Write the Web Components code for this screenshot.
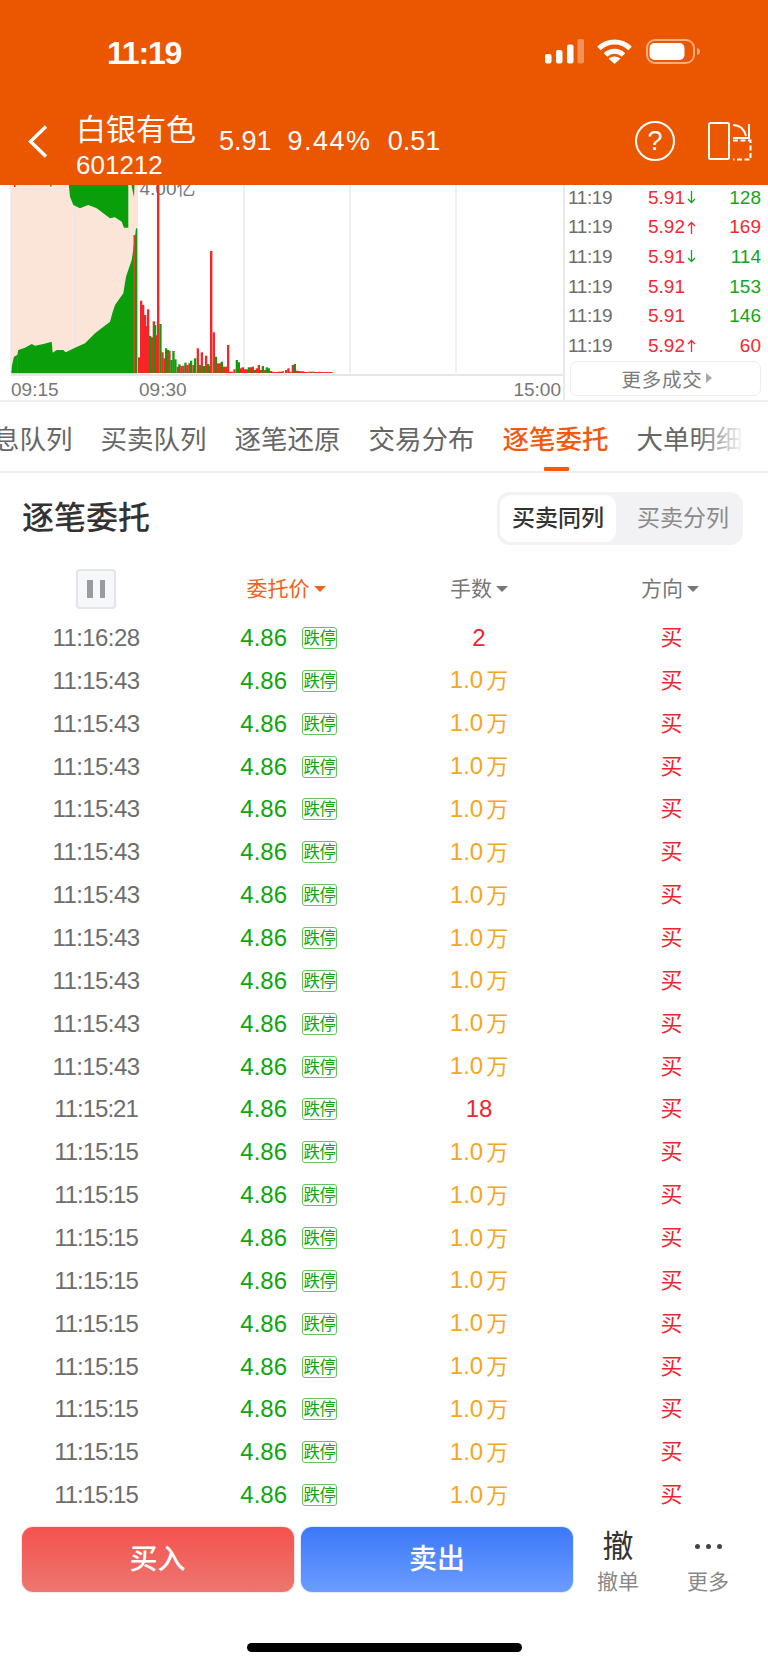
<!DOCTYPE html>
<html lang="zh-CN">

<head>
    <meta charset="UTF-8">
    <title>逐笔委托</title>
    <style>
        html, body { margin: 0; height: 1665px; overflow: hidden; background: #fff; }
        body { font-family: "Liberation Sans", "Noto Sans CJK SC", sans-serif; color: #333; }
    </style>
</head>

<body>
    <stock-header name="白银有色" code="601212"></stock-header>
    <tape-panel>
        <trade-row price="5.91" dir="down" vol="128" side="g"></trade-row>
        <trade-row price="5.92" dir="up" vol="169" side="r"></trade-row>
        <trade-row price="5.91" dir="down" vol="114" side="g"></trade-row>
        <trade-row price="5.91" vol="153" side="g"></trade-row>
        <trade-row price="5.91" vol="146" side="g"></trade-row>
        <trade-row price="5.92" dir="up" vol="60" side="r"></trade-row>
    </tape-panel>
    <tab-strip>
        <span>消息队列</span>
        <span>买卖队列</span>
        <span>逐笔还原</span>
        <span>交易分布</span>
        <span class="on">逐笔委托</span>
        <span>大单明细</span>
    </tab-strip>
    <section-head>逐笔委托</section-head>
    <order-table></order-table>
    <action-bar></action-bar>

    <script>
        const shade = (host, html) => {
            host.attachShadow({ mode: 'open' }).innerHTML = html
        }

        class StockHeader extends HTMLElement {
            constructor() {
                super()
                shade(this, `
                <style>
                    :host { display: block; height: 185px; background: #EB5600; color: #fff; }
                    .status { height: 100px; box-sizing: border-box; padding: 37px 0 0 107px; display: flex; }
                    .clock { font-size: 32px; line-height: 32px; font-weight: 700; letter-spacing: -1.2px; width: 438px; }
                    .status svg { display: block; margin-top: 2px; }
                    .nav { height: 85px; display: flex; align-items: flex-start; }
                    .back { margin: 25px 0 0 28px; width: 48px; }
                    .title { margin-top: 13px; width: 143px; }
                    .name { font-size: 30px; line-height: 34px; }
                    .code { font-size: 26px; line-height: 30px; margin: 3px 0 0 0; }
                    .quote { margin-top: 26px; display: flex; gap: 16px; font-size: 27px; line-height: 30px; width: 416px; }
                    .quote .pct { letter-spacing: 1.5px; }
                    .help { margin-top: 21px; width: 36px; height: 36px; border: 2px solid #fff; border-radius: 50%; text-align: center; font-size: 27px; line-height: 36px; }
                    .swap { margin: 21px 0 0 33px; }
                </style>
                <div class="status">
                    <div class="clock">11:19</div>
                    <svg width="156" height="26" viewBox="0 0 156 26" fill="#fff">
                        <rect x="0" y="15" width="6.5" height="9.5" rx="2"/>
                        <rect x="11" y="11" width="6.5" height="13.5" rx="2"/>
                        <rect x="22" y="5.5" width="6.5" height="19" rx="2"/>
                        <rect x="32.5" y="0" width="6.5" height="24.5" rx="2" opacity=".35"/>
                        <path d="M54 9.5A22 22 0 0 1 85 9.5M60.5 16A12.5 12.5 0 0 1 78.5 16" fill="none" stroke="#fff" stroke-width="5"/>
                        <path d="M69.5 25L63.5 19.5Q69.5 15.5 75.5 19.5Z"/>
                        <rect x="102" y="1" width="47" height="23" rx="8" fill="none" stroke="#fff" stroke-opacity=".5" stroke-width="2"/>
                        <rect x="104.5" y="4" width="35" height="17" rx="5"/>
                        <path d="M152 9Q155 10 155 12.5Q155 15 152 16Z" opacity=".5"/>
                    </svg>
                </div>
                <div class="nav">
                    <div class="back">
                        <svg width="20" height="33" viewBox="0 0 20 33" fill="none" stroke="#fff" stroke-width="3.4" style="display:block">
                            <path d="M18 1.5L2.5 16.5L18 31.5"/>
                        </svg>
                    </div>
                    <div class="title">
                        <div class="name">${this.getAttribute('name')}</div>
                        <div class="code">${this.getAttribute('code')}</div>
                    </div>
                    <div class="quote"><span>5.91</span><span class="pct">9.44%</span><span>0.51</span></div>
                    <div class="help">?</div>
                    <svg class="swap" width="44" height="40" viewBox="0 0 44 40" fill="none" stroke="#fff" stroke-width="2" style="display:block">
                        <rect x="1" y="2" width="20" height="36" rx="1.5"/>
                        <path d="M25 4Q35 4 38 15"/>
                        <path d="M41 3V17H25"/>
                        <path d="M25 19.5H42.5V38.5H25" stroke-dasharray="5 2.5"/>
                    </svg>
                </div>`)
            }
        }
        customElements.define('stock-header', StockHeader)

        // 柱子数据：x,顶部y（都是放大3倍的坐标）,颜色
        const BARS = '414,532,r;420,362,r;426,375,r;432,405,r;437,438,r;441,388,r;447,468,g;453,472,r;458,424,r;462,435,g;468,466,r;478,432,g;484,517,r;490,535,r;495,505,g;500,510,g;505,512,r;511,540,g;517,513,g;523,538,g;530,560,r;535,553,g;541,558,r;547,557,r;553,548,g;559,555,r;565,550,r;570,542,g;577,555,r;582,535,g;590,505,r;596,555,g;602,517,r;608,558,g;615,527,r;621,552,g;626,557,g;638,457,r;644,530,g;650,550,r;656,550,r;662,545,g;668,560,r;674,560,r;681,495,r;687,575,r;693,575,r;700,568,r;707,540,g;713,547,g;719,565,r;725,562,r;731,568,r;737,568,r;743,562,g;749,562,r;755,560,r;761,570,g;767,565,r;773,555,r;779,570,r;785,558,g;791,570,r;797,562,g;803,565,g;809,573,r;815,575,r;821,576,r;827,576,r;833,575,r;839,575,r;845,574,r;855,570,r;862,565,r;868,575,r;875,555,r;881,552,g;887,572,r;893,573,r;900,574,r;906,574,r;912,576,r;918,576,r;925,575,r;931,575,r;937,575,g;943,576,r;949,576,r;955,575,r;961,576,r;967,576,r;973,576,r;979,576,r;985,576,r;991,576,r'
        const GREEN_AREA = '34,580 36,555 42,530 52,525 55,510 75,503 95,492 105,497 130,492 155,485 158,518 170,510 190,510 197,517 225,503 255,490 285,460 330,425 337,400 345,375 370,340 378,290 395,240 405,170 408,145 412,145 412,580'
        const GREEN_TOP = '205,0 210,50 220,75 240,85 265,75 290,85 310,100 330,115 345,112 365,125 372,143 385,143 385,0'
        const GREEN_CUT = '391,0 402,52 404,0'

        class TapeChart extends HTMLElement {
            constructor() {
                super()
                const pts = s => s.split(' ').map(p => { const [x, y] = p.split(','); return (x / 3).toFixed(1) + ',' + (y / 3 - 5).toFixed(1) }).join(' ')
                const bars = BARS.split(';').map(b => {
                    const [x, top, c] = b.split(',')
                    const y = top / 3 - 5
                    return `<rect x="${(x / 3).toFixed(1)}" y="${y.toFixed(1)}" width="2.3" height="${(188 - y).toFixed(1)}" fill="${c == 'r' ? '#F52528' : '#0A9E0A'}"/>`
                }).join('')
                shade(this, `
                <style>
                    :host { display: block; flex: none; width: 563px; height: 216px; }
                    svg { display: block; }
                    text { font-size: 19px; fill: #777; }
                </style>
                <svg width="563" height="216" viewBox="0 0 563 216">
                    <rect x="11" y="0" width="127" height="188" fill="#FBE5D9"/>
                    <path d="M75 0V188M244 0V188M350 0V188M456 0V188M11 0V188" stroke="#E4E8F0" stroke-width="1.4"/>
                    <text x="139.5" y="10">4.00亿</text>
                    <polygon points="${pts(GREEN_AREA)}" fill="#0A9E0A"/>
                    <polygon points="${pts(GREEN_TOP)}" fill="#0A9E0A"/>
                    <polygon points="${pts(GREEN_CUT)}" fill="#0A9E0A"/>
                    <rect x="133.5" y="50" width="1.6" height="138" fill="#D9452B"/>
                    <rect x="14" y="0" width="1.5" height="2" fill="#F52528"/>
                    <rect x="50" y="0" width="1.5" height="1.5" fill="#0A9E0A"/>
                    <rect x="17" y="172" width="1" height="16" fill="#D9452B"/>
                    ${bars}
                    <rect x="157" y="0" width="2.4" height="188" fill="#F52528"/>
                    <rect x="210" y="66" width="2.4" height="122" fill="#F52528"/>
                    <path d="M11 190H563" stroke="#E6E6E6" stroke-width="2"/>
                    <text x="11" y="211">09:15</text>
                    <text x="139" y="211">09:30</text>
                    <text x="561" y="211" text-anchor="end">15:00</text>
                </svg>`)
            }
        }
        customElements.define('tape-chart', TapeChart)

        class TradeRow extends HTMLElement {
            constructor() {
                super()
                const dir = this.getAttribute('dir')
                const col = this.getAttribute('side') == 'r' ? '#F5282F' : '#12A71B'
                const arrow = dir == null ? '' : `
                    <svg width="9" height="13" viewBox="0 0 9 13" fill="none" stroke="${dir == 'up' ? '#F5282F' : '#12A71B'}" stroke-width="1.3">
                        <path d="${dir == 'up' ? 'M4.5 13V1.5M1 5L4.5 1.5L8 5' : 'M4.5 0V11.5M1 8L4.5 11.5L8 8'}"/>
                    </svg>`
                shade(this, `
                <style>
                    :host { display: grid; grid-template-columns: 44px 73px 11px 65px; height: 29.6px; align-items: center; font-size: 19px; }
                    .t { color: #6d6d6d; letter-spacing: -.4px; white-space: nowrap; }
                    .p { color: #F5282F; text-align: right; }
                    .a { padding-left: 2px; height: 13px; }
                    .a svg { display: block; }
                    .v { text-align: right; color: ${col}; }
                </style>
                <span class="t">11:19</span>
                <span class="p">${this.getAttribute('price')}</span>
                <span class="a">${arrow}</span>
                <span class="v">${this.getAttribute('vol')}</span>`)
            }
        }
        customElements.define('trade-row', TradeRow)

        class TapePanel extends HTMLElement {
            constructor() {
                super()
                shade(this, `
                <style>
                    :host { display: flex; height: 215px; overflow: hidden; border-bottom: 2px solid #EFEFEF; box-sizing: content-box; }
                    .list { border-left: 2px solid #EAEAEA; padding: 0 7px 0 3px; margin: 0; flex: 1; }
                    .rows { margin-top: -2px; }
                    .more { margin: 0 0 0 1.5px; padding-left: 4px; width: 191px; height: 35px; box-sizing: border-box; border: 1px solid #EDEDED; border-radius: 7px; display: flex; align-items: center; justify-content: center; gap: 4px; font-size: 19.5px; letter-spacing: .7px; color: #7c7c7c; }
                    .more i { border-left: 6px solid #aaa; border-top: 5px solid transparent; border-bottom: 5px solid transparent; }
                </style>
                <tape-chart></tape-chart>
                <div class="list">
                    <div class="rows"><slot></slot></div>
                    <div class="more">更多成交<i></i></div>
                </div>`)
            }
        }
        customElements.define('tape-panel', TapePanel)

        class TabStrip extends HTMLElement {
            constructor() {
                super()
                shade(this, `
                <style>
                    :host { display: block; position: relative; height: 69px; overflow: hidden; border-bottom: 2px solid #EDEDED; }
                    .row { display: flex; gap: 28px; margin-left: -33.5px; height: 69px; line-height: 76px; font-size: 26.5px; color: #666; white-space: nowrap; }
                    ::slotted(.on) { color: #F25A0F; font-weight: 500; position: relative; }
                    .bar { position: absolute; left: 544px; top: 65px; width: 25px; height: 4px; border-radius: 1px; background: #F25A0F; }
                    .fade { position: absolute; right: 0; top: 0; width: 72px; height: 66px; background: linear-gradient(to right, rgba(255,255,255,0), #fff 68%); }
                </style>
                <div class="row"><slot></slot></div>
                <div class="bar"></div>
                <div class="fade"></div>`)
            }
        }
        customElements.define('tab-strip', TabStrip)

        class SectionHead extends HTMLElement {
            constructor() {
                super()
                shade(this, `
                <style>
                    :host { display: flex; justify-content: space-between; padding: 19px 25px 0 22px; height: 52px; }
                    .title { font-size: 32px; line-height: 53px; font-weight: 500; color: #333; }
                    .seg { width: 246px; height: 53px; background: #F2F2F5; border-radius: 13px; padding: 3px; box-sizing: border-box; display: flex; font-size: 23px; color: #8a8a8a; }
                    .seg span { width: 114px; line-height: 47px; text-align: center; margin-left: 10px; white-space: nowrap; }
                    .seg .on { width: 116px; background: #fff; border-radius: 11px; color: #333; font-weight: 500; margin-left: 0; }
                </style>
                <div class="title"><slot></slot></div>
                <div class="seg"><span class="on">买卖同列</span><span>买卖分列</span></div>`)
            }
        }
        customElements.define('section-head', SectionHead)

        class OrderRow extends HTMLElement {
            constructor() {
                super()
                const qty = this.getAttribute('qty')
                const time = this.getAttribute('time')
                const wide = /(28|43)$/.test(time)
                const wan = qty.endsWith('万')
                const qtyHtml = wan ? `${qty.slice(0, -1)}<span class="w">万</span>` : qty
                shade(this, `
                <style>
                    :host { display: grid; grid-template-columns: 192px 194px 186px 1fr; height: 42.87px; align-items: center; text-align: center; font-size: 24px; line-height: 26px; }
                    .t { color: #6d6d6d; letter-spacing: ${wide ? '-.6px' : '-1px'}; }
                    .p { color: #0EA60E; display: flex; justify-content: flex-end; align-items: center; gap: 15px; padding-right: 49px; }
                    .tag { width: 33px; height: 20px; line-height: 20px; border: 1px solid #63C463; border-radius: 3px; font-size: 16.5px; letter-spacing: -.5px; }
                    .q { color: ${wan ? '#F5A623' : '#F0242F'}; }
                    .w { font-size: 22px; margin-left: 3px; }
                    .d { color: #F0242F; font-size: 22px; padding-left: 3px; }
                </style>
                <span class="t">${time}</span>
                <span class="p"><span>4.86</span><span class="tag">跌停</span></span>
                <span class="q">${qtyHtml}</span>
                <span class="d">买</span>`)
            }
        }
        customElements.define('order-row', OrderRow)

        class OrderTable extends HTMLElement {
            constructor() {
                super()
                const rows = [['11:16:28', '2']]
                for (let i = 0; i < 10; i++) rows.push(['11:15:43', '1.0万'])
                rows.push(['11:15:21', '18'])
                for (let i = 0; i < 9; i++) rows.push(['11:15:15', '1.0万'])
                shade(this, `
                <style>
                    :host { display: block; padding-top: 25px; height: 947px; box-sizing: content-box; overflow: hidden; }
                    .head { display: grid; grid-template-columns: 192px 194px 186px 1fr; height: 47.6px; font-size: 21px; color: #777; }
                    .head > div { display: flex; justify-content: center; align-items: flex-start; height: 40px; line-height: 40px; gap: 4px; }
                    .pause { width: 40px; height: 40px; box-sizing: border-box; background: #F6F7F9; border: 2px solid #E3E5EA; border-radius: 4px; display: flex; justify-content: center; align-items: center; gap: 7px; }
                    .pause i { width: 5.5px; height: 18px; background: #9A9AA3; }
                    .sort { border-left: 6px solid transparent; border-right: 6px solid transparent; border-top: 6px solid #777; margin-top: 17px; }
                    .on { color: #F0611B; padding-right: 6px; }
                    .on .sort { border-top-color: #F0611B; }
                </style>
                <div class="head">
                    <div><div class="pause"><i></i><i></i></div></div>
                    <div class="on">委托价<span class="sort"></span></div>
                    <div>手数<span class="sort"></span></div>
                    <div>方向<span class="sort"></span></div>
                </div>
                ${rows.map(r => `<order-row time="${r[0]}" qty="${r[1]}"></order-row>`).join('')}`)
            }
        }
        customElements.define('order-table', OrderTable)

        class ActionBar extends HTMLElement {
            constructor() {
                super()
                shade(this, `
                <style>
                    :host { display: block; padding-top: 10.5px; }
                    .bar { display: flex; height: 65px; padding-left: 21.5px; }
                    .btn { width: 272px; height: 65px; border-radius: 11px; color: #fff; font-size: 28px; font-weight: 500; line-height: 65px; text-align: center; }
                    .buy { background: linear-gradient(#F4524E, #ED7670); margin-right: 7.5px; box-shadow: 0 0 0 1px rgba(244,82,78,.15); }
                    .sell { background: linear-gradient(#3C78F8, #6B9CFF); box-shadow: 0 0 0 1px rgba(60,120,248,.15); }
                    .tool { text-align: center; color: #888; font-size: 21px; line-height: 26px; }
                    .tool b { display: block; height: 42px; font-weight: 400; font-size: 31px; line-height: 40px; color: #333; }
                    .one { width: 90px; }
                    .two { margin-left: 0; width: 90px; }
                    .dots { height: 42px; display: flex; justify-content: center; align-items: flex-start; gap: 6px; padding-top: 17px; box-sizing: border-box; }
                    .dots i { width: 5px; height: 5px; border-radius: 50%; background: #444; }
                    .home { width: 275px; height: 9.5px; border-radius: 5px; background: #000; margin: 51px auto 0; }
                </style>
                <div class="bar">
                    <div class="btn buy">买入</div>
                    <div class="btn sell">卖出</div>
                    <div class="tool one"><b>撤</b>撤单</div>
                    <div class="tool two"><div class="dots"><i></i><i></i><i></i></div>更多</div>
                </div>
                <div class="home"></div>`)
            }
        }
        customElements.define('action-bar', ActionBar)
    </script>
</body>

</html>
